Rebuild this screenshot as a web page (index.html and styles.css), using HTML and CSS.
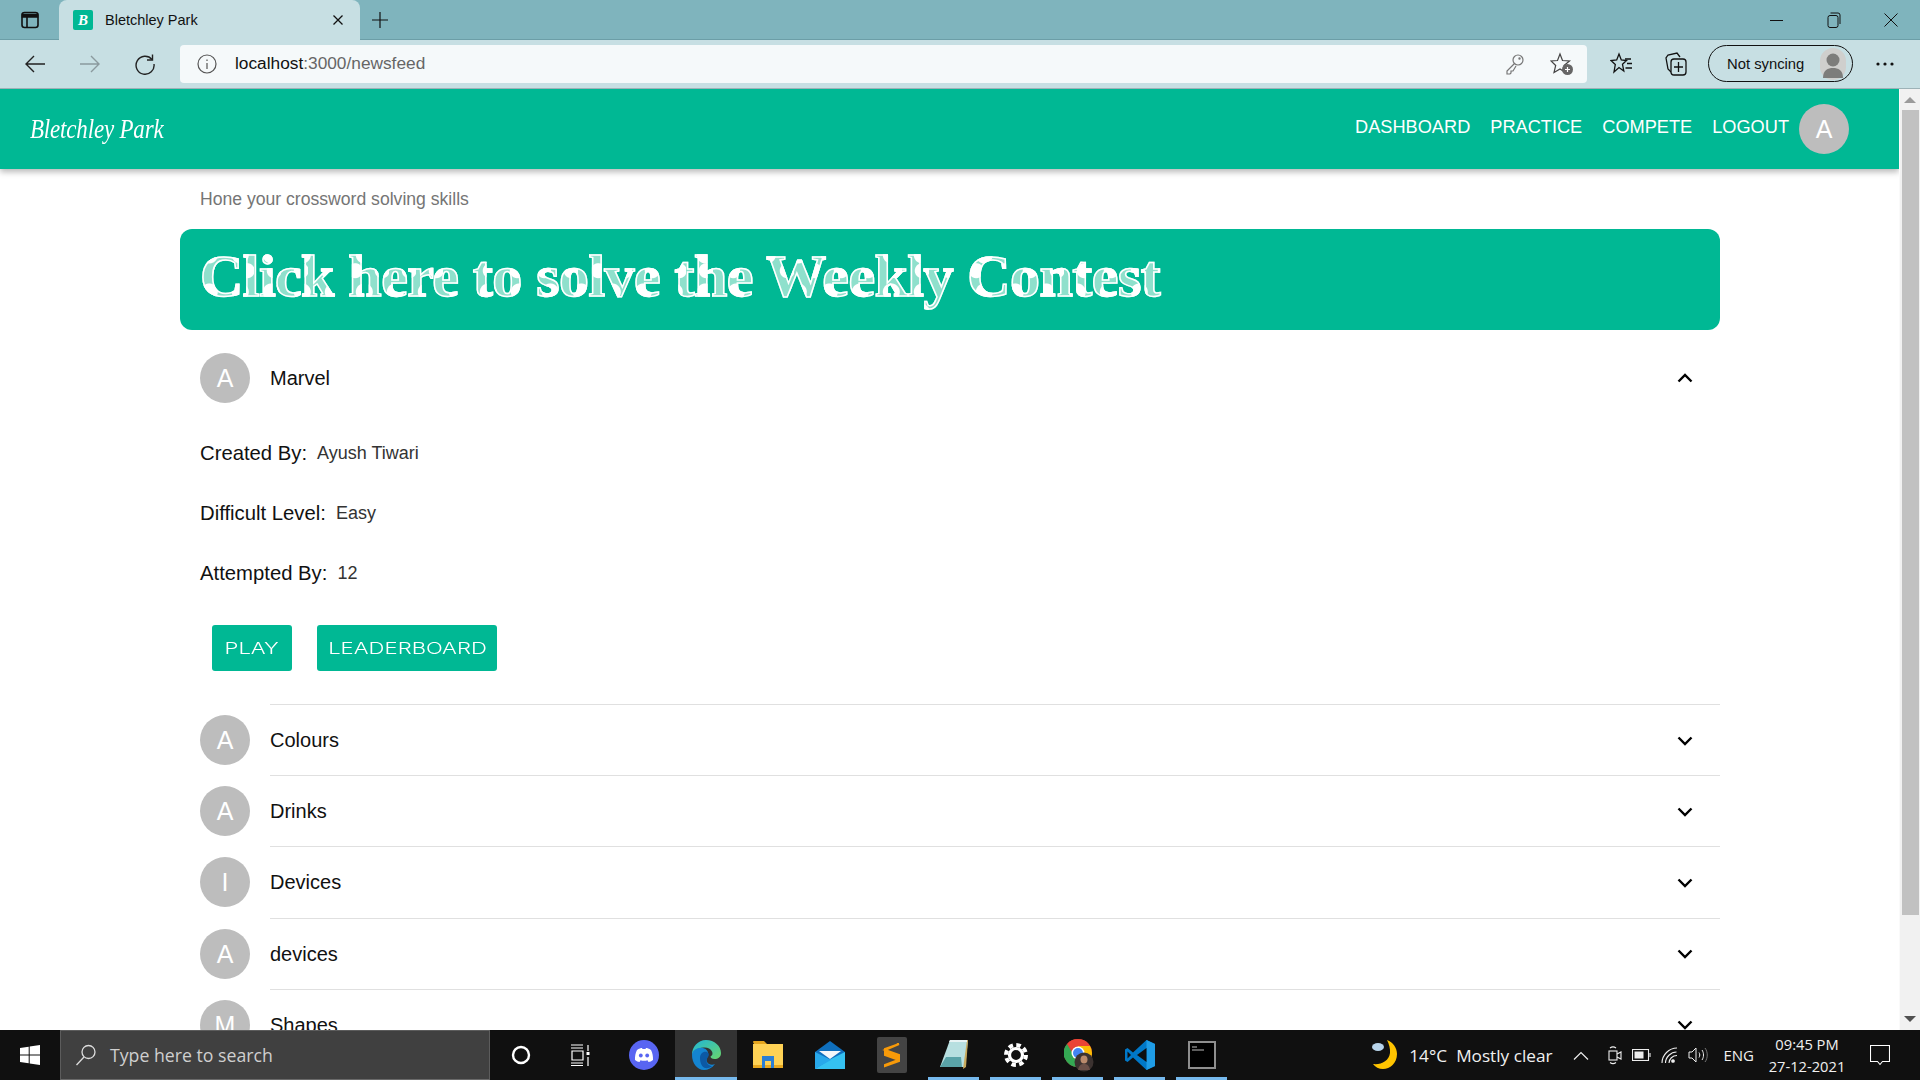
FILE: index.html
```html
<!DOCTYPE html>
<html lang="en">
<head>
<meta charset="utf-8">
<title>Bletchley Park</title>
<link rel="stylesheet" href="styles.css">
</head>
<body>
<div class="screen">
  <header class="chrome">
    <div class="titlebar">
      <div class="tabtoggle"><svg width="20" height="20" viewBox="0 0 20 20" fill="none" stroke="#111" stroke-width="1.6"><rect x="2" y="2.5" width="16" height="15" rx="2.5"/><path d="M2.5 4.5h15V7h-15z" fill="#111"/><path d="M7 6v11"/></svg></div>
      <div class="tab">
        <span class="favicon">B</span>
        <span class="tabtitle">Bletchley Park</span>
        <svg class="tabclose" width="12" height="12" viewBox="0 0 12 12" stroke="#111" stroke-width="1.3"><path d="M1.5 1.5l9 9M10.5 1.5l-9 9"/></svg>
      </div>
      <div class="newtab"><svg width="18" height="18" viewBox="0 0 18 18" stroke="#111" stroke-width="1.2"><path d="M9 1v16M1 9h16"/></svg></div>
      <div class="winctrls">
        <svg width="14" height="14" viewBox="0 0 14 14" stroke="#111" stroke-width="1"><path d="M0 7.5h13"/></svg>
        <svg width="14" height="16" viewBox="0 0 14 16" fill="none" stroke="#111" stroke-width="1"><rect x="1" y="3.5" width="10" height="12" rx="2"/><path d="M3.5 1h7.5a2 2 0 0 1 2 2v9"/></svg>
        <svg width="14" height="14" viewBox="0 0 14 14" stroke="#111" stroke-width="1"><path d="M.5.5l13 13M13.500.5l-13 13"/></svg>
      </div>
    </div>
    <div class="toolbar">
      <div class="navbtns">
        <svg width="22" height="20" viewBox="0 0 22 20" fill="none" stroke="#222" stroke-width="1.4"><path d="M21 10H2M10 2l-8 8 8 8"/></svg>
        <svg width="22" height="20" viewBox="0 0 22 20" fill="none" stroke="#8b9a9e" stroke-width="1.4"><path d="M1 10h19M12 2l8 8-8 8"/></svg>
        <svg width="22" height="22" viewBox="0 0 22 22" fill="none" stroke="#222" stroke-width="1.4"><path d="M18 6.500A9 9 0 1 0 20 11"/><path d="M18.500 1.500v5.500h-5.500"/></svg>
      </div>
      <div class="address">
        <svg class="info" width="20" height="20" viewBox="0 0 20 20" fill="none" stroke="#555" stroke-width="1.2"><circle cx="10" cy="10" r="9"/><path d="M10 9v6M10 5.500v1.500"/></svg>
        <span class="url">localhost<span class="urlrest">:3000/newsfeed</span></span>
        <svg class="key" width="20" height="22" viewBox="0 0 20 22" fill="none" stroke="#777" stroke-width="1.2"><circle cx="13" cy="7" r="5"/><path d="M9.500 10.500L2 18v3h3l1-1v-2h2l3-5"/><circle cx="14.500" cy="5.500" r=".6"/></svg>
        <svg class="starplus" width="24" height="24" viewBox="0 0 24 24" fill="none" stroke="#444" stroke-width="1.2"><path d="M10 2l2.500 6.500 7 .5-5.500 4.500 1.500 7L10 17l-6 3.500 1.700-7L1 9l6.500-.5z"/><circle cx="17.500" cy="17.500" r="5.500" fill="#666" stroke="none"/><path d="M17.500 15v5M15 17.500h5" stroke="#fff"/></svg>
      </div>
      <div class="toolicons">
        <svg width="24" height="24" viewBox="0 0 24 24" fill="none" stroke="#111" stroke-width="1.3"><path d="M9 2l2.300 6 5.200.5-4 3.800 1.300 6.700L9 15.500 4 20l1.300-7.500L1 8.500 6.700 8z"/><path d="M15 7h6M17 11.500h5M15.500 16h6.500"/></svg>
        <svg width="24" height="26" viewBox="0 0 24 26" fill="none" stroke="#111" stroke-width="1.3"><path d="M7 21l-3-3L2 7l2-3 9-2 3 4"/><rect x="7" y="8" width="15" height="16" rx="3" fill="#c7dfe3"/><path d="M14.500 11v10M10 16h9"/></svg>
      </div>
      <div class="syncpill">
        <span class="synctext">Not syncing</span>
        <svg width="26" height="32" viewBox="0 0 26 32"><rect width="26" height="32" rx="13" fill="#cfcfcd"/><circle cx="13" cy="12" r="6.500" fill="#7d7d7b"/><path d="M3 30c0-8 5-10 10-10s10 2 10 10z" fill="#7d7d7b"/></svg>
      </div>
      <div class="moredots"><svg width="18" height="4" viewBox="0 0 18 4" fill="#111"><circle cx="2" cy="2" r="1.600"/><circle cx="9" cy="2" r="1.600"/><circle cx="16" cy="2" r="1.600"/></svg></div>
    </div>
  </header>

  <div class="viewport">
    <div class="page">
      <nav class="appnav">
        <span class="brand">Bletchley Park</span>
        <div class="navlinks">
          <a>DASHBOARD</a><a>PRACTICE</a><a>COMPETE</a><a>LOGOUT</a>
        </div>
        <span class="avatar navavatar">A</span>
      </nav>
      <main class="content">
        <p class="tagline">Hone your crossword solving skills</p>
        <div class="banner"><span class="bannertext">Click here to solve the Weekly Contest</span></div>

        <section class="openitem">
          <div class="itemhead">
            <span class="avatar">A</span>
            <span class="itemtitle">Marvel</span>
            <svg class="chev" width="16" height="10" viewBox="0 0 16 10" fill="none" stroke="#000" stroke-width="2.400"><path d="M1.500 8.500L8 2l6.500 6.500"/></svg>
          </div>
          <div class="details">
            <p class="detail"><span class="dlabel">Created By:</span><span class="dvalue">Ayush Tiwari</span></p>
            <p class="detail"><span class="dlabel">Difficult Level:</span><span class="dvalue">Easy</span></p>
            <p class="detail"><span class="dlabel">Attempted By:</span><span class="dvalue">12</span></p>
            <div class="actions">
              <button class="btn btnplay"><span>PLAY</span></button>
              <button class="btn btnboard"><span>LEADERBOARD</span></button>
            </div>
          </div>
        </section>

        <ul class="items">
          <li class="item"><span class="avatar">A</span><div class="itembody"><span class="itemtitle">Colours</span><svg class="chev" width="16" height="10" viewBox="0 0 16 10" fill="none" stroke="#000" stroke-width="2.400"><path d="M1.500 1.500L8 8l6.500-6.500"/></svg></div></li>
          <li class="item"><span class="avatar">A</span><div class="itembody"><span class="itemtitle">Drinks</span><svg class="chev" width="16" height="10" viewBox="0 0 16 10" fill="none" stroke="#000" stroke-width="2.400"><path d="M1.500 1.500L8 8l6.500-6.500"/></svg></div></li>
          <li class="item"><span class="avatar">I</span><div class="itembody"><span class="itemtitle">Devices</span><svg class="chev" width="16" height="10" viewBox="0 0 16 10" fill="none" stroke="#000" stroke-width="2.400"><path d="M1.500 1.500L8 8l6.500-6.500"/></svg></div></li>
          <li class="item"><span class="avatar">A</span><div class="itembody"><span class="itemtitle">devices</span><svg class="chev" width="16" height="10" viewBox="0 0 16 10" fill="none" stroke="#000" stroke-width="2.400"><path d="M1.500 1.500L8 8l6.500-6.500"/></svg></div></li>
          <li class="item"><span class="avatar">M</span><div class="itembody"><span class="itemtitle">Shapes</span><svg class="chev" width="16" height="10" viewBox="0 0 16 10" fill="none" stroke="#000" stroke-width="2.400"><path d="M1.500 1.500L8 8l6.500-6.500"/></svg></div></li>
        </ul>
      </main>
    </div>
    <div class="scrollbar">
      <svg width="14" height="8" viewBox="0 0 14 8" fill="#9a9a9a"><path d="M7 1l6 6H1z"/></svg>
      <div class="thumb"></div>
      <svg width="14" height="8" viewBox="0 0 14 8" fill="#505050"><path d="M7 7L1 1h12z"/></svg>
    </div>
  </div>

  <footer class="taskbar">
    <div class="start"><svg width="20" height="20" viewBox="0 0 20 20" fill="#fff"><path d="M0 3l8.700-1.300v7.700H0zM9.700 1.500L20 0v9.400H9.700zM0 10.400h8.700v7.900L0 17zM9.700 10.400H20V20L9.700 18.500z"/></svg></div>
    <div class="search">
      <svg width="22" height="22" viewBox="0 0 22 22" fill="none" stroke="#ddd" stroke-width="1.300"><circle cx="13.500" cy="8" r="6.500"/><path d="M9 13l-7.500 8"/></svg>
      <span class="searchtext">Type here to search</span>
    </div>
    <div class="slot slotcortana"><svg width="20" height="20" viewBox="0 0 20 20" fill="none" stroke="#fff" stroke-width="2.400"><circle cx="10" cy="10" r="8"/></svg></div>
    <div class="slot slottask"><svg width="20" height="22" viewBox="0 0 20 22" fill="none" stroke="#fff" stroke-width="1.200"><path d="M1 1h12M1 4h12M2 7h11v9H2zM1 19h12M1 21.500h12M18 1v6M18 13v9"/><rect x="16.500" y="8" width="3" height="3" fill="#fff" stroke="none"/></svg></div>
    <div class="slot"><svg width="30" height="30" viewBox="0 0 30 30"><circle cx="15" cy="15" r="15" fill="#5865f2"/><path d="M8 10c2-1.500 4-2 5-2l.5 1h3l.5-1c1 0 3 .5 5 2 1.500 3 2.200 6.500 2 10-1.500 1-3 2-4.500 2l-1-1.700c-2.300 .7-4.700 .7-7 0L10.500 22C9 22 7.500 21 6 20c-.2-3.500 .5-7 2-10z" fill="#fff"/><circle cx="11.800" cy="15.500" r="1.900" fill="#5865f2"/><circle cx="18.200" cy="15.500" r="1.900" fill="#5865f2"/></svg></div>
    <div class="slot slotactive underlined"><svg width="30" height="30" viewBox="0 0 30 30"><defs><linearGradient id="eg1" x1="0" y1="0" x2="1" y2="1"><stop offset="0" stop-color="#1fb5d8"/><stop offset="1" stop-color="#6ad66b"/></linearGradient></defs><path d="M15 0c8.500 0 15 6 15 13 0 4-3 6-6.500 6-2.500 0-4-1-4-2.500 2-1 2.500-3 1.500-5-1.500-3-5-4.500-8.500-4C7 8 3 11 1 15 .8 7 7 0 15 0z" fill="url(#eg1)"/><path d="M1 15c0-5 6-8 11-7 4 1 6 4 5 8-2 3-2 6 1 8 2 1 4 1 6 0-3 4-7 6-11 6C6 30 1 23 1 15z" fill="#1484d0"/><path d="M9 18c0-4 3-7 7-6 2 1 2.500 3 1 5-2 3-2 6 1 8 1 .7 2 1 3 1.200-2 1.500-5 2.300-7 1.800-3-1-5-5-5-10z" fill="#0c59a4"/></svg></div>
    <div class="slot"><svg width="30" height="28" viewBox="0 0 30 28"><path d="M0 1a1 1 0 0 1 1-1h10l3 3H1z" fill="#e6a61e"/><path d="M0 3h30v24H0z" fill="#ffd255"/><path d="M0 24h30v3H0z" fill="#e8a81f"/><path d="M9 15h12v12h-3v-7h-6v7H9z" fill="#2c7fd4"/></svg></div>
    <div class="slot"><svg width="30" height="28" viewBox="0 0 30 28"><path d="M0 11L15 0l15 11v17H0z" fill="#0f6fbd"/><path d="M4 10h22L15 18z" fill="#f4f7fa"/><path d="M30 11v17H0l14-9z" fill="#35c1f1"/><path d="M0 11v17l16-9z" fill="#28a8ea"/></svg></div>
    <div class="slot"><svg width="30" height="36" viewBox="0 0 30 36"><rect width="30" height="36" rx="2" fill="#444"/><path d="M22 7L8 12v6l14 5-1 0-13 5 0 1 14-5v-6L8 13z" fill="#f79a09" stroke="#f79a09" stroke-width="2"/></svg></div>
    <div class="slot underlined"><svg width="28" height="32" viewBox="0 0 28 32"><path d="M10 1h18l-3 27H0z" fill="#b7dfe0"/><path d="M6 18L0 28h22l-1-10z" fill="#5aa3a8"/><path d="M28 1l-1 0-4 29 3-2z" fill="#c8a95c"/><path d="M10 1h17v2H9z" fill="#e8f3f4"/></svg></div>
    <div class="slot underlined"><svg width="24" height="26" viewBox="0 0 24 26" fill="none" stroke="#fff"><circle cx="12" cy="13" r="6.500" stroke-width="3.200"/><circle cx="12" cy="13" r="10" stroke-width="4" stroke-dasharray="4.500 3.354"/></svg></div>
    <div class="slot underlined slotchrome"><svg width="32" height="34" viewBox="0 0 32 34"><circle cx="14" cy="15" r="14" fill="#db4437"/><path d="M14 1a14 14 0 0 1 12 7H14a7 7 0 0 0-6 3L3 6a14 14 0 0 1 11-5z" fill="#ea4335"/><path d="M14 8h12a14 14 0 0 1 2 7c0 3-1 5-2 7H14z" fill="#fbbc05"/><path d="M3 6l6 10 5 13A14 14 0 0 1 3 6z" fill="#34a853"/><circle cx="14" cy="15" r="6.500" fill="#fff"/><circle cx="14" cy="15" r="5" fill="#4285f4"/><circle cx="20" cy="24" r="9.500" fill="#3b3230"/><ellipse cx="20" cy="21.500" rx="3.500" ry="4" fill="#b98a6c"/><path d="M14 32c1-5 3-6 6-6s5 1 6 6z" fill="#6a5048"/></svg></div>
    <div class="slot underlined"><svg width="30" height="30" viewBox="0 0 30 30"><path d="M21.500 0L30 4v22l-8.500 4L8 17.500 2.500 22 0 20.500v-11L2.500 8 8 12.500z" fill="#0078c8"/><path d="M21.500 0L30 4v22l-8.500 4z" fill="#1f9ce6"/><path d="M21.500 8L12 15l9.500 7z" fill="#0d0f10"/><path d="M2.500 11.500L6 15l-3.500 3.500z" fill="#0d0f10"/></svg></div>
    <div class="slot underlined"><svg width="28" height="28" viewBox="0 0 28 28"><rect x="1" y="1" width="26" height="26" fill="#000" stroke="#8e8e8e" stroke-width="2"/><path d="M4 6h5M4 9h12" stroke="#bbb"/></svg></div>

    <div class="tray">
      <svg class="moon" width="26" height="30" viewBox="0 0 26 30"><path d="M15 0c6 2 10 8 10 14 0 9-7 15-14 15-4 0-8-2-10-5 8 1 16-3 17-11 .4-5-1-9-3-13z" fill="#ffc400"/><ellipse cx="6" cy="7" rx="6" ry="4" fill="#b8d4ea"/></svg>
      <span class="temp">14°C</span>
      <span class="weather">Mostly clear</span>
      <div class="trayicons">
        <svg class="caret" width="16" height="9" viewBox="0 0 16 9" fill="none" stroke="#eee" stroke-width="1.200"><path d="M1 8.500l7-7 7 7"/></svg>
        <svg width="14" height="20" viewBox="0 0 14 20" fill="none" stroke="#eee" stroke-width="1.100"><rect x="1" y="6" width="8" height="9"/><path d="M9 9l4-2v7l-4-2M2 3c2-1.500 4-1.500 6 0M2 17.500c2 1.500 4 1.500 6 0"/></svg>
        <svg width="19" height="12" viewBox="0 0 19 12" fill="none" stroke="#eee" stroke-width="1.100"><rect x=".5" y=".5" width="16" height="11"/><rect x="2.500" y="2.500" width="9" height="7" fill="#eee" stroke="none"/><path d="M18 4v4"/></svg>
        <svg width="17" height="17" viewBox="0 0 17 17" fill="none" stroke="#eee" stroke-width="1.100"><path d="M1 16C1 8 8 1 16 1M4.500 16c0-6 5.500-11 11-11M8 16c0-4 3.500-7.500 8-7.500"/><circle cx="12" cy="14" r="1.300" fill="#eee"/></svg>
        <svg width="21" height="18" viewBox="0 0 21 18" fill="none" stroke="#eee" stroke-width="1"><path d="M1 6h3l4-4v14l-4-4H1z"/><path d="M11 6.500c1 1.500 1 3.500 0 5M14 4c2 3 2 7 0 10" /><path d="M17 2c3 4 3 10 0 14" stroke="#777"/></svg>
      </div>
      <span class="lang">ENG</span>
      <div class="clock"><span>09:45 PM</span><span>27-12-2021</span></div>
      <svg class="notif" width="20" height="21" viewBox="0 0 20 21" fill="none" stroke="#fff" stroke-width="1.100"><path d="M.5.500h19v16h-7l-2.500 3-2.500-3h-7z"/></svg>
    </div>
  </footer>
</div>
</body>
</html>
```
FILE: styles.css
```css
* { box-sizing: border-box; }
html, body { margin: 0; height: 100%; overflow: hidden; }
body { font-family: "Liberation Sans", Arial, sans-serif; background: #fff; }
p, ul { margin: 0; padding: 0; }
ul { list-style: none; }

.screen { width: 1920px; height: 1080px; display: flex; flex-direction: column; }

/* browser chrome */
.chrome { flex: none; height: 89px; display: flex; flex-direction: column; }
.titlebar { height: 40px; background: #7fb4bd; display: flex; align-items: flex-start; border-bottom: 1px solid #6c9ea7; }
.tabtoggle { width: 59px; height: 39px; display: flex; align-items: center; justify-content: center; }
.tab { width: 301px; height: 40px; background: #c7dfe3; border-radius: 8px 8px 0 0; display: flex; align-items: center; padding: 0 16px 0 14px; }
.favicon { width: 20px; height: 20px; border-radius: 2px; background: #00b894; color: #fff; font: italic bold 15px/20px "Liberation Serif", serif; text-align: center; }
.tabtitle { margin-left: 12px; font: 14.5px "Liberation Sans", sans-serif; color: #111; flex: 1; }
.newtab { width: 40px; height: 39px; display: flex; align-items: center; justify-content: center; }
.winctrls { margin-left: auto; display: flex; align-items: center; height: 39px; gap: 43px; padding-right: 22px; }
.toolbar { height: 49px; background: #c7dfe3; border-bottom: 1px solid #9db2b7; display: flex; align-items: center; padding-bottom: 1px; }
.navbtns { width: 180px; display: flex; align-items: center; gap: 33px; padding-left: 24px; }
.address { width: 1407px; height: 38px; background: #f5f9fa; border-radius: 4px; display: flex; align-items: center; padding: 0 13px 0 17px; }
.url { margin-left: 18px; font-size: 17.3px; color: #111; }
.urlrest { color: #666; }
.key { margin-left: auto; }
.starplus { margin-left: 25px; }
.toolicons { display: flex; align-items: center; gap: 30px; margin-left: 23px; }
.syncpill { margin-left: 20px; width: 145px; height: 37px; border: 1.5px solid #111; border-radius: 19px; display: flex; align-items: center; padding: 0 6px 0 18px; justify-content: space-between; }
.synctext { font-size: 14.8px; color: #111; }
.moredots { margin-left: 23px; display: flex; }

/* viewport */
.viewport { flex: 1; min-height: 0; display: flex; }
.page { flex: 1; min-width: 0; overflow: hidden; background: #fff; }
.scrollbar { flex: none; width: 21px; background: #f1f1f1; display: flex; flex-direction: column; align-items: center; border-left: 1px solid #fafafa; }
.scrollbar svg { flex: none; }
.scrollbar svg:first-child { margin: 7px 0 6px; }
.thumb { width: 17px; height: 805px; background: #c1c1c1; }
.scrollbar svg:last-child { margin-top: auto; margin-bottom: 7px; }

/* app nav */
.appnav { height: 80px; background: #00b894; display: flex; align-items: center; padding: 0 50px 0 30px; box-shadow: 0 3px 6px rgba(0,0,0,.28); position: relative; }
.brand { font: italic 28px "Liberation Serif", serif; color: #fff; transform: scaleX(.82); transform-origin: left center; letter-spacing: -.2px; }
.navlinks { margin-left: auto; display: flex; gap: 20px; padding-bottom: 4px; }
.navlinks a { font-size: 18.2px; line-height: 21px; color: #fff; }
.avatar { flex: none; width: 50px; height: 50px; border-radius: 50%; background: #bdbdbd; color: #fff; font-size: 25px; line-height: 50px; text-align: center; }
.navavatar { margin-left: 10px; }

/* content */
.content { width: 1540px; margin-left: 180px; }
.tagline { height: 60px; padding: 20px 0 0 20px; font-size: 17.6px; line-height: 20px; color: #757575; }
.banner { height: 101px; background: #00b894; border-radius: 12px; padding: 0 0 0 20px; display: flex; align-items: flex-start; }
.bannertext {
  margin-top: 13px;
  font: bold 60px/68px "Liberation Serif", serif;
  letter-spacing: -.55px;
  color: transparent;
  -webkit-text-stroke: 1.5px #fff;
  background-image:
    radial-gradient(circle at 30% 35%, #fff 0 8px, transparent 9px),
    radial-gradient(circle at 75% 70%, #fff 0 7px, transparent 8px),
    linear-gradient(#8fe0cc, #8fe0cc);
  background-size: 31px 37px, 27px 41px, auto;
  -webkit-background-clip: text;
  background-clip: text;
}

.openitem { padding-top: 23px; }
.itemhead { display: flex; align-items: center; padding-left: 20px; padding-right: 27px; }
.itemtitle { font-size: 20px; color: #111; }
.itemhead .itemtitle { margin-left: 20px; }
.chev { margin-left: auto; flex: none; }
.details { padding: 38px 0 0 20px; }
.detail { height: 24px; margin-bottom: 36px; display: flex; align-items: center; }
.dlabel { font-size: 20.3px; color: #111; }
.dvalue { margin-left: 10px; font-size: 18px; color: #333; padding-top: 1px; }
.actions { display: flex; gap: 25px; padding-left: 12px; margin-top: 40px; }
.btn { height: 46px; border: 0; border-radius: 3px; background: #00b894; color: #fff; padding: 0; font: 300 16px Inter, "Liberation Sans", sans-serif; }
.btn span { display: inline-block; transform: scaleX(1.38); }
.btnplay { width: 80px; }
.btnboard { width: 180px; }

.items { margin-top: 33px; }
.item { display: flex; gap: 20px; padding-left: 20px; }
.item .avatar { margin-top: 11px; }
.itembody { flex: 1; height: 71.2px; border-top: 1.5px solid #e0e0e0; display: flex; align-items: center; padding-right: 27px; padding-top: 1px; }

/* taskbar */
.taskbar { flex: none; height: 50px; background: #101010; display: flex; align-items: center; }
.start { width: 60px; height: 50px; display: flex; align-items: center; justify-content: center; }
.search { width: 430px; height: 50px; background: #404040; border: 1px solid #5c5c5c; border-bottom-color: #6a6a6a; display: flex; align-items: center; padding-left: 14px; }
.searchtext { margin-left: 13px; font: 17.7px "Open Sans", sans-serif; color: #cfcfcf; }
.slot { flex: none; width: 62px; height: 50px; display: flex; align-items: center; justify-content: center; position: relative; }
.slotcortana { width: 61px; }
.slottask svg { margin-right: 5px; }
.slotchrome svg { margin-left: 4px; }
.slotactive { background: #333; }
.underlined::after { content: ""; position: absolute; left: 5px; right: 6px; bottom: 0; height: 3px; background: #76b9ed; }
.slotactive.underlined::after { left: 0; right: 0; }
.tray { margin-left: auto; display: flex; align-items: center; height: 50px; padding-right: 30px; color: #f0f0f0; }
.moon { margin-right: 11px; }
.temp, .weather { font: 17.2px "Open Sans", sans-serif; }
.weather { margin-left: 9px; }
.trayicons { display: flex; align-items: center; gap: 10px; margin-left: 21px; }
.caret { margin-right: 9px; }
.lang { margin-left: 14px; font: 15px "Open Sans", sans-serif; }
.clock { margin-left: 8px; width: 90px; display: flex; flex-direction: column; align-items: center; gap: 5px; font: 14.7px/17px "Open Sans", sans-serif; }
.notif { margin-left: 18px; }
```
